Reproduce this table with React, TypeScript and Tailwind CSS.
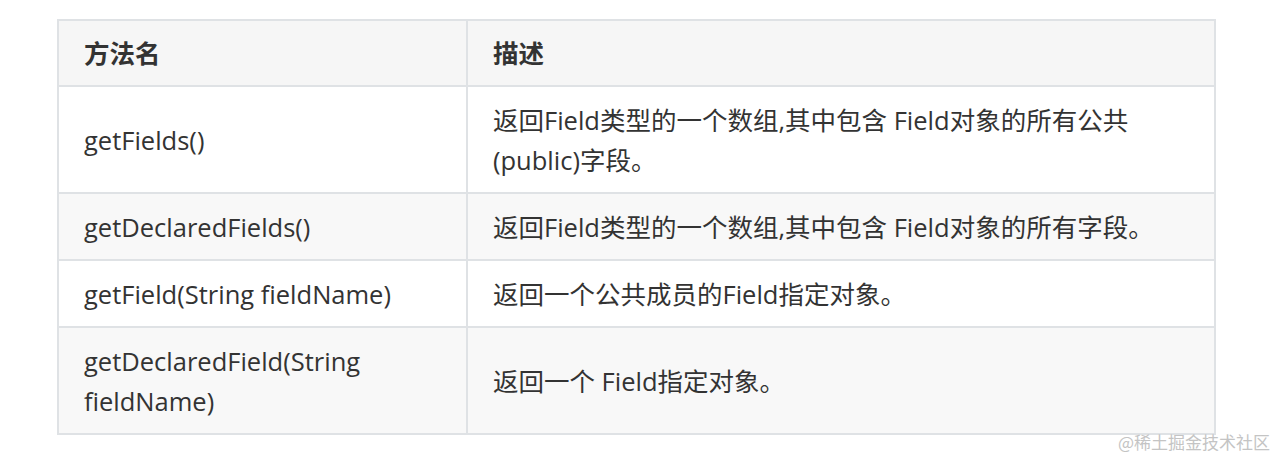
const rows = [
  {
    name: "getFields()",
    desc: "返回Field类型的一个数组,其中包含 Field对象的所有公共(public)字段。",
  },
  {
    name: "getDeclaredFields()",
    desc: "返回Field类型的一个数组,其中包含 Field对象的所有字段。",
  },
  {
    name: "getField(String fieldName)",
    desc: "返回一个公共成员的Field指定对象。",
  },
  {
    name: "getDeclaredField(String fieldName)",
    desc: "返回一个 Field指定对象。",
  },
];

const font = {
  fontFamily: '"Open Sans", "Noto Sans CJK SC", sans-serif',
};

export default function App() {
  return (
    <div className="relative h-[459px] w-[1280px] overflow-hidden bg-white" style={font}>
      <div className="pl-[57px] pt-[19px]">
        <table className="w-[1159px] table-fixed border-collapse text-[25.5px] leading-[40px] text-[#333]">
          <colgroup>
            <col className="w-[409px]" />
            <col />
          </colgroup>
          <thead>
            <tr className="bg-[#f6f6f6]">
              <th className="border-2 border-[#dfe2e5] px-[25px] py-[12px] text-left font-bold">
                方法名
              </th>
              <th className="border-2 border-[#dfe2e5] px-[25px] py-[12px] text-left font-bold">
                描述
              </th>
            </tr>
          </thead>
          <tbody>
            {rows.map((row, i) => (
              <tr key={row.name} className={i % 2 === 1 ? "bg-[#f8f8f8]" : "bg-white"}>
                <td className="border-2 border-[#dfe2e5] px-[25px] pt-[13px] pb-[12px] align-middle">
                  {row.name}
                </td>
                <td className="border-2 border-[#dfe2e5] px-[25px] pt-[13px] pb-[12px] align-middle">
                  {row.desc}
                </td>
              </tr>
            ))}
          </tbody>
        </table>
      </div>
      <div
        className="absolute bottom-[7px] right-[10px] text-[17px] leading-[20px] text-[#c4c4c4]"
        style={{ fontFamily: '"Noto Sans CJK SC", sans-serif' }}
      >
        @稀土掘金技术社区
      </div>
    </div>
  );
}
